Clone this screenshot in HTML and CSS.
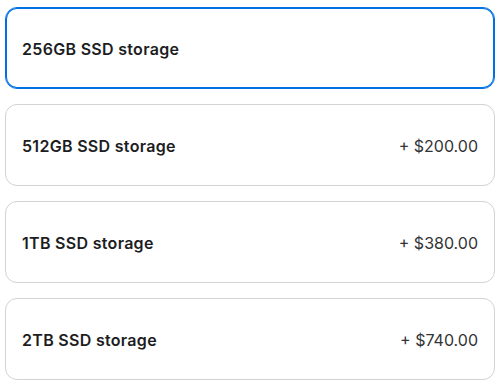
FILE: index.html
```html
<!DOCTYPE html>
<html lang="en">
<head>
    <meta charset="UTF-8">
    <meta name="viewport" content="width=device-width, initial-scale=1.0">
    <title>Storage</title>
    <link rel="stylesheet" href="styles.css">
</head>
<body>
    <div class="options">
        <label class="option selected">
            <span class="name">256GB SSD storage</span>
        </label>
        <label class="option">
            <span class="name">512GB SSD storage</span>
            <span class="price">+ $200.00</span>
        </label>
        <label class="option">
            <span class="name">1TB SSD storage</span>
            <span class="price">+ $380.00</span>
        </label>
        <label class="option">
            <span class="name">2TB SSD storage</span>
            <span class="price">+ $740.00</span>
        </label>
    </div>
</body>
</html>
```

FILE: styles.css
```css
* {
    margin: 0;
    padding: 0;
    box-sizing: border-box;
}

body {
    font-family: Inter, "Liberation Sans", Arial, sans-serif;
    background-color: #ffffff;
    color: #1d1d1f;
    padding: 7px 6px 0 5px;
}

.options {
    display: flex;
    flex-direction: column;
    gap: 15px;
}

.option {
    display: flex;
    align-items: center;
    justify-content: space-between;
    height: 82px;
    padding: 1px 16px 0;
    border: 1px solid #d2d2d7;
    border-radius: 12px;
    cursor: pointer;
}

.option.selected {
    border-color: #0071e3;
    box-shadow: inset 0 0 0 1px #0071e3;
}

.name {
    font-size: 16px;
    font-weight: 600;
    letter-spacing: 0.3px;
}

.price {
    font-size: 16px;
    color: #333336;
}
```
